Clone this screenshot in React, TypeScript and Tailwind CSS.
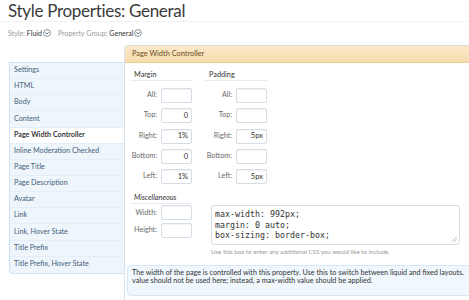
import React from "react";

const items = [
  "Settings",
  "HTML",
  "Body",
  "Content",
  "Page Width Controller",
  "Inline Moderation Checked",
  "Page Title",
  "Page Description",
  "Avatar",
  "Link",
  "Link, Hover State",
  "Title Prefix",
  "Title Prefix, Hover State",
];

function Chev() {
  return (
    <svg width="8" height="8" viewBox="0 0 8 8" className="inline-block ml-[1px]">
      <circle cx="4" cy="4" r="3.4" fill="#fff" stroke="#6b7a88" strokeWidth="0.8" />
      <path d="M2.3 3.3 L4 5 L5.7 3.3" fill="none" stroke="#4a5866" strokeWidth="0.9" />
    </svg>
  );
}

function Field({ label, value }: { label: string; value?: string }) {
  return (
    <div className="flex items-center h-[15px] mb-[5.3px]">
      <div className="w-[28px] text-right text-[7.2px] text-[#6a6a6a] pr-[1px]">{label}</div>
      <div className="ml-[3px] w-[31px] h-[15px] border border-[#d5dde6] rounded-[2px] bg-white shadow-[inset_0_1px_1px_rgba(0,0,0,0.05)] flex items-center justify-end pr-[3px] text-[7.5px] text-[#333]">
        {value}
      </div>
    </div>
  );
}

function Heading({ children, w }: { children: React.ReactNode; w: string }) {
  return (
    <div className={`${w} pl-[4px] h-[10px] border-b border-[#e6ecf1] text-[7.3px] text-[#333] leading-[8px]`}>
      {children}
    </div>
  );
}

export default function App() {
  return (
    <div
      className="w-[469px] h-[300px] overflow-hidden bg-white relative"
      style={{ fontFamily: "Lato, 'DejaVu Sans', sans-serif" }}
    >
      <div className="h-[22px] pl-[8px] border-b border-[#f0f3f6]">
        <div className="text-[17px] tracking-[-0.3px] leading-[20px] text-[#3a3a3a] pt-[1px]">Style Properties: General</div>
      </div>
      <div className="flex items-center h-[10px] mt-[6px] pl-[8px] text-[7px] text-[#999]">
        <span>Style:</span>
        <span className="ml-[2px] text-[#333]">Fluid</span>
        <Chev />
        <span className="ml-[7px]">Property Group:</span>
        <span className="ml-[2px] text-[#333]">General</span>
        <Chev />
      </div>
      <div className="flex mt-[7px] pl-[9px]">
        <div className="w-[115px] mt-[17px] shrink-0">
          <div className="border border-r-0 border-[#d0e2f0] rounded-bl-[4px] overflow-hidden bg-[#eef6fc]">
            {items.map((it, i) => {
              const sel = it === "Page Width Controller";
              return (
                <div
                  key={it}
                  className={`h-[16.15px] flex items-center pl-[4px] text-[7.2px] ${
                    i < items.length - 1 ? "border-b border-[#e2eef8]" : ""
                  } ${sel ? "bg-white text-[#222] font-semibold mr-[-1px]" : "text-[#45607a]"} ${
                    i === 0 ? "text-[#333]" : ""
                  }`}
                >
                  {it}
                </div>
              );
            })}
          </div>
        </div>
        <div className="w-[380px] shrink-0 border-l border-[#d6e3ee] rounded-tl-[4px] h-[260px]">
          <div className="h-[18px] rounded-tl-[4px] border-t border-[#d9dcd8] border-b border-b-[#edcf94] bg-gradient-to-b from-[#fbe9c9] to-[#f6dcae] flex items-center pl-[7px] text-[7.4px] text-[#6b4a1f]">
            Page Width Controller
          </div>
          <div className="pl-[5px]">
            <div className="flex mt-[8px]">
              <div className="w-[75px]">
                <Heading w="w-[62px]">Margin</Heading>
                <div className="mt-[7px]">
                  <Field label="All:" />
                  <Field label="Top:" value="0" />
                  <Field label="Right:" value="1%" />
                  <Field label="Bottom:" value="0" />
                  <Field label="Left:" value="1%" />
                </div>
              </div>
              <div className="w-[75px]">
                <Heading w="w-[62px]">Padding</Heading>
                <div className="mt-[7px]">
                  <Field label="All:" />
                  <Field label="Top:" />
                  <Field label="Right:" value="5px" />
                  <Field label="Bottom:" />
                  <Field label="Left:" value="5px" />
                </div>
              </div>
            </div>
            <div className="mt-[5px]">
              <Heading w="w-[62px]">
                <span className="italic">Miscellaneous</span>
              </Heading>
            </div>
            <div className="flex mt-[1px]">
              <div className="w-[81px]">
                <Field label="Width:" />
                <div className="mt-[-3px]">
                  <Field label="Height:" />
                </div>
              </div>
              <div>
                <div className="relative w-[249px] h-[40px] border border-[#d5dde6] rounded-[3px] bg-white pl-[3px] pt-[3px] text-[8.3px] leading-[10.4px] text-[#333]" style={{ fontFamily: "'DejaVu Sans Mono', monospace" }}>
                  <div>max-width: 992px;</div>
                  <div>margin: 0 auto;</div>
                  <div>box-sizing: border-box;</div>
                  <svg width="6" height="6" viewBox="0 0 6 6" className="absolute right-[2px] bottom-[2px]">
                    <path d="M5.5 1 L1 5.5 M5.5 3.5 L3.5 5.5" stroke="#999" strokeWidth="0.7" />
                  </svg>
                </div>
                <div className="mt-[2px] text-[6.2px] text-[#999] whitespace-nowrap">
                  Use this box to enter any additional CSS you would like to include.
                </div>
              </div>
            </div>
          </div>
          <div className="ml-[2px] mt-[8px] w-[360px] h-[31px] border border-[#d7e7f4] rounded-[4px] bg-[#f0f7fd] pl-[4px] pt-[3px] text-[7.2px] leading-[8.5px] text-[#333] whitespace-nowrap overflow-hidden">
            <div>The width of the page is controlled with this property. Use this to switch between liquid and fixed layouts.</div>
            <div>value should not be used here; instead, a max-width value should be applied.</div>
          </div>
        </div>
      </div>
    </div>
  );
}
